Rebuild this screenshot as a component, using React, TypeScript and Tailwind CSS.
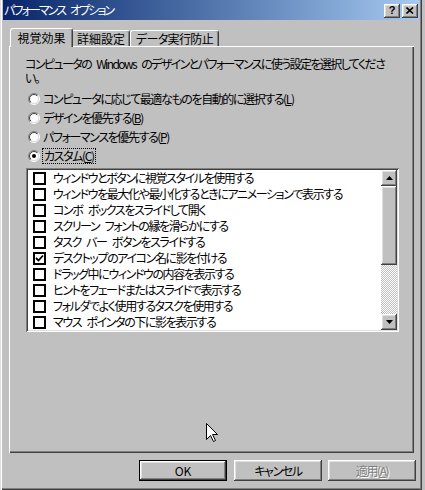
import React from "react";

const raised =
  "shadow-[inset_-1px_-1px_#404040,inset_1px_1px_#fff,inset_-2px_-2px_#808080,inset_2px_2px_#dfdfdf]";

function Radio({ checked }: { checked?: boolean }) {
  return (
    <svg width="12" height="12" viewBox="0 0 12 12" className="shrink-0">
      <defs>
        <linearGradient id="ro" x1="0" y1="0" x2="1" y2="1">
          <stop offset="0.5" stopColor="#808080" />
          <stop offset="0.5" stopColor="#ffffff" />
        </linearGradient>
        <linearGradient id="ri" x1="0" y1="0" x2="1" y2="1">
          <stop offset="0.5" stopColor="#404040" />
          <stop offset="0.5" stopColor="#dfdfdf" />
        </linearGradient>
      </defs>
      <circle cx="6" cy="6" r="5.5" fill="none" stroke="url(#ro)" />
      <circle cx="6" cy="6" r="4.5" fill="#fff" stroke="url(#ri)" />
      {checked && <circle cx="6" cy="6" r="2" fill="#000" />}
    </svg>
  );
}

function Check({ checked }: { checked?: boolean }) {
  return (
    <div className="w-[13px] h-[13px] shrink-0 bg-white border-2 border-black flex items-center justify-center">
      {checked && (
        <svg width="9" height="9" viewBox="0 0 9 9">
          <path d="M1 4 L3.5 6.5 L8 1.5" stroke="#000" strokeWidth="1.8" fill="none" />
        </svg>
      )}
    </div>
  );
}

function Tri({ down }: { down?: boolean }) {
  return (
    <svg width="7" height="4" viewBox="0 0 7 4">
      {down ? <polygon points="0,0 7,0 3.5,4" fill="#000" /> : <polygon points="0,4 7,4 3.5,0" fill="#000" />}
    </svg>
  );
}

const items: [string, boolean][] = [
  ["ウィンドウとボタンに視覚スタイルを使用する", false],
  ["ウィンドウを最大化や最小化するときにアニメーションで表示する", false],
  ["コンボ ボックスをスライドして開く", false],
  ["スクリーン フォントの縁を滑らかにする", false],
  ["タスク バー ボタンをスライドする", false],
  ["デスクトップのアイコン名に影を付ける", true],
  ["ドラッグ中にウィンドウの内容を表示する", false],
  ["ヒントをフェードまたはスライドで表示する", false],
  ["フォルダでよく使用するタスクを使用する", false],
  ["マウス ポインタの下に影を表示する", false],
];

export default function App() {
  return (
    <div className="relative w-[425px] h-[490px] bg-[#c0c0c0] overflow-hidden font-['Noto_Sans_CJK_JP',sans-serif] text-[12px] text-black tracking-[-1.4px] [word-spacing:4px] [font-feature-settings:'palt']">
      <div className="w-[422px] h-[490px] flex flex-col px-[3px] shadow-[inset_1px_0_#dfdfdf,inset_2px_0_#fff,inset_-1px_-1px_#404040,inset_-2px_-2px_#808080]">
        {/* title bar */}
        <div className="h-[20px] shrink-0 bg-linear-to-r from-[#0a246a] to-[#a6caf0] flex items-center pl-[1px] pr-[1px]">
          <span className="text-white leading-none tracking-[-1.9px]">パフォーマンス オプション</span>
          <div className="ml-auto flex gap-[2px] mt-[1px] tracking-normal">
            <div className={`w-[16px] h-[14px] bg-[#c0c0c0] ${raised} flex items-center justify-center`}>
              <span className="font-['Liberation_Sans',sans-serif] font-bold text-[11px] leading-none mt-[-1px]">?</span>
            </div>
            <div className={`w-[16px] h-[14px] bg-[#c0c0c0] ${raised} flex items-center justify-center`}>
              <svg width="8" height="7" viewBox="0 0 8 7">
                <path d="M0.5 0.5 L7 6.5 M7 0.5 L0.5 6.5" stroke="#000" strokeWidth="1.6" />
              </svg>
            </div>
          </div>
        </div>

        {/* tabs */}
        <div className="mt-[8px] h-[19px] -mb-[1px] ml-[7px] flex items-start relative z-10 tracking-normal">
          <div className="h-[19px] w-[63px] bg-[#c0c0c0] border-t border-l border-white border-r border-r-[#404040] shadow-[inset_-1px_0_#808080] rounded-t-[3px] flex items-center justify-center leading-none pb-[1px]">
            視覚効果
          </div>
          <div className="mt-[2px] h-[16px] w-[57px] border-t border-white border-r border-r-[#404040] shadow-[inset_-1px_0_#808080] rounded-tr-[3px] flex items-center justify-center leading-none">
            詳細設定
          </div>
          <div className="mt-[2px] h-[16px] w-[89px] border-t border-l border-white border-r border-r-[#404040] shadow-[inset_-1px_0_#808080] rounded-t-[3px] flex items-center justify-center leading-none tracking-[-0.6px]">
            データ実行防止
          </div>
        </div>

        {/* panel */}
        <div className="ml-[6px] w-[405px] h-[407px] shrink-0 pl-[16px] pt-[11px] shadow-[inset_1px_1px_#fff,inset_-1px_-1px_#404040,inset_-2px_-2px_#808080]">
          <div className="flex flex-col whitespace-nowrap tracking-[-1.6px]">
            <div className="h-[14px] flex items-center leading-none">
              コンピュータの Windows のデザインとパフォーマンスに使う設定を選択してくださ
            </div>
            <div className="h-[14px] flex items-center leading-none">い。</div>
          </div>
          <div className="mt-[4px] flex flex-col">
            <div className="h-[19px] flex items-center">
              <div className="ml-[3px]"><Radio /></div>
              <span className="ml-[3px] leading-none">
                コンピュータに応じて最適なものを自動的に選択する(<u>L</u>)
              </span>
            </div>
            <div className="h-[19px] flex items-center">
              <div className="ml-[3px]"><Radio /></div>
              <span className="ml-[3px] leading-none">
                デザインを優先する(<u>B</u>)
              </span>
            </div>
            <div className="h-[19px] flex items-center">
              <div className="ml-[3px]"><Radio /></div>
              <span className="ml-[3px] leading-none">
                パフォーマンスを優先する(<u>P</u>)
              </span>
            </div>
            <div className="h-[19px] flex items-center">
              <div className="ml-[3px]"><Radio checked /></div>
              <span className="ml-[2px] leading-none border border-dotted border-black px-[1px] py-[1px]">
                カスタム(<u>C</u>)
              </span>
            </div>
          </div>

          {/* list box */}
          <div className="mt-[3px] ml-[1px] w-[373px] h-[164px] p-[2px] bg-white shadow-[inset_1px_1px_#808080,inset_-1px_-1px_#fff,inset_2px_2px_#404040,inset_-2px_-2px_#dfdfdf] flex">
            <div className="flex-1 flex flex-col overflow-hidden">
              {items.map(([t, c], i) => (
                <div key={i} className="h-[16px] shrink-0 flex items-center pl-[5px]">
                  <Check checked={c} />
                  <span className="ml-[7px] leading-none whitespace-nowrap">{t}</span>
                </div>
              ))}
            </div>
            <div className="w-[16px] flex flex-col">
              <div className={`h-[16px] bg-[#c0c0c0] ${raised} flex items-center justify-center`}>
                <Tri />
              </div>
              <div className={`h-[79px] bg-[#c0c0c0] ${raised}`} />
              <div className="flex-1 [background-image:repeating-conic-gradient(#c0c0c0_0%_25%,#ffffff_0%_50%)] [background-size:2px_2px]" />
              <div className={`h-[16px] bg-[#c0c0c0] ${raised} flex items-center justify-center`}>
                <Tri down />
              </div>
            </div>
          </div>
        </div>

        {/* buttons */}
        <div className="mt-[7px] ml-[136px] flex">
          <div className="w-[88px] h-[21px] border border-black">
            <div className={`w-full h-full bg-[#c0c0c0] ${raised} flex items-center justify-center leading-none tracking-normal`}>
              OK
            </div>
          </div>
          <div className={`ml-[7px] w-[88px] h-[21px] bg-[#c0c0c0] ${raised} flex items-center justify-center leading-none`}>
            キャンセル
          </div>
          <div className={`ml-[6px] w-[88px] h-[21px] bg-[#c0c0c0] ${raised} flex items-center justify-center leading-none text-[#808080] [text-shadow:1px_1px_0_#fff]`}>
            適用(<u>A</u>)
          </div>
        </div>
      </div>

      {/* mouse cursor */}
      <svg className="absolute left-[206px] top-[423px]" width="13" height="20" viewBox="0 0 13 20">
        <polygon
          points="0.5,0.5 0.5,16.5 4.5,12.5 7.5,18.5 9.5,17.5 6.5,11.5 11.5,11.5"
          fill="#fff"
          stroke="#000"
          strokeWidth="1"
        />
      </svg>
    </div>
  );
}
